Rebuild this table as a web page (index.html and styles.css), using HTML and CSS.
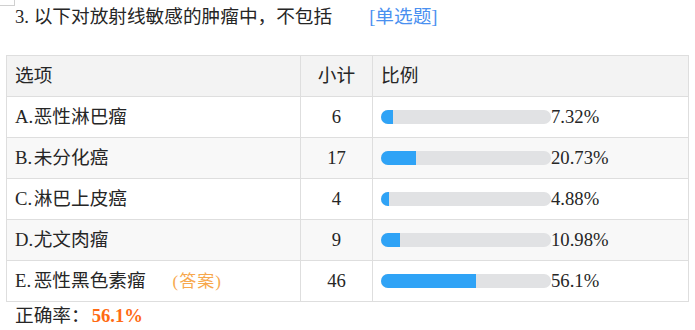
FILE: index.html
```html
<!DOCTYPE html>
<html lang="zh-CN">
<head>
<meta charset="utf-8">
<title>题目统计</title>
<link rel="stylesheet" href="styles.css">
</head>
<body>
<div class="corner"></div>
<div class="title"><span class="key">3.</span>以下对放射线敏感的肿瘤中，不包括<span class="qtype">[单选题]</span></div>
<table class="stats">
  <colgroup>
    <col class="c-opt"><col class="c-cnt"><col class="c-pct">
  </colgroup>
  <thead>
    <tr><th class="opt">选项</th><th class="cnt">小计</th><th class="pct">比例</th></tr>
  </thead>
  <tbody>
    <tr><td class="opt"><span class="key">A.</span>恶性淋巴瘤</td><td class="cnt">6</td><td class="pct"><div class="bar-wrap"><div class="bar"><div class="fill" style="width:7.32%"></div></div><span class="val">7.32%</span></div></td></tr>
    <tr class="alt"><td class="opt"><span class="key">B.</span>未分化癌</td><td class="cnt">17</td><td class="pct"><div class="bar-wrap"><div class="bar"><div class="fill" style="width:20.73%"></div></div><span class="val">20.73%</span></div></td></tr>
    <tr><td class="opt"><span class="key">C.</span>淋巴上皮癌</td><td class="cnt">4</td><td class="pct"><div class="bar-wrap"><div class="bar"><div class="fill" style="width:4.88%"></div></div><span class="val">4.88%</span></div></td></tr>
    <tr class="alt"><td class="opt"><span class="key">D.</span>尤文肉瘤</td><td class="cnt">9</td><td class="pct"><div class="bar-wrap"><div class="bar"><div class="fill" style="width:10.98%"></div></div><span class="val">10.98%</span></div></td></tr>
    <tr><td class="opt"><span class="key">E.</span>恶性黑色素瘤<span class="answer">(答案)</span></td><td class="cnt">46</td><td class="pct"><div class="bar-wrap"><div class="bar"><div class="fill" style="width:56.1%"></div></div><span class="val">56.1%</span></div></td></tr>
  </tbody>
</table>
<div class="rate">正确率：<span class="rate-val">56.1%</span></div>
</body>
</html>
```

FILE: styles.css
```css
html, body {
  margin: 0;
  padding: 0;
  background: #ffffff;
}
body {
  position: relative;
  width: 695px;
  height: 330px;
  overflow: hidden;
  font-family: "Liberation Serif", "Noto Sans CJK SC", serif;
  font-size: 18.67px;
  color: #262626;
}
.corner {
  position: absolute;
  left: 0;
  top: 0;
  width: 14px;
  height: 5px;
  border-right: 1px solid #d0d0d0;
  border-bottom: 1px solid #d0d0d0;
}
.key {
  display: inline-block;
  width: 1em;
}
.title {
  padding: 4px 0 0 15px;
  height: 26px;
  line-height: 26px;
  white-space: nowrap;
}
.qtype {
  color: #4a90f0;
  margin-left: 37px;
}
.stats {
  margin: 25px 0 0 6px;
  width: 682px;
  border-collapse: collapse;
  table-layout: fixed;
}
.c-opt { width: 294px; }
.c-cnt { width: 72px; }
.c-pct { width: 316px; }
.stats th, .stats td {
  border: 1px solid #dedede;
  height: 40px;
  padding: 0 8px;
  font-weight: normal;
  text-align: left;
  line-height: 24px;
  white-space: nowrap;
}
.stats thead th {
  background: #f3f3f3;
}
.stats tr.alt td {
  background: #f8f8f8;
}
.stats .cnt {
  text-align: center;
  padding: 0;
}
.stats .pct {
  padding-left: 8px;
}
.bar-wrap {
  display: flex;
  align-items: center;
}
.bar {
  width: 170px;
  height: 14px;
  border-radius: 7px;
  background: #e1e2e4;
  overflow: hidden;
  flex: none;
}
.fill {
  height: 100%;
  background: #2fa3f6;
}
.answer {
  color: #f7a84d;
  font-size: 17px;
  letter-spacing: 1px;
  margin-left: 27px;
}
.rate {
  padding-left: 15px;
  height: 26px;
  line-height: 26px;
  margin-top: 1px;
}
.rate-val {
  color: #ff6a13;
  font-weight: bold;
  margin-left: 2px;
}
```
